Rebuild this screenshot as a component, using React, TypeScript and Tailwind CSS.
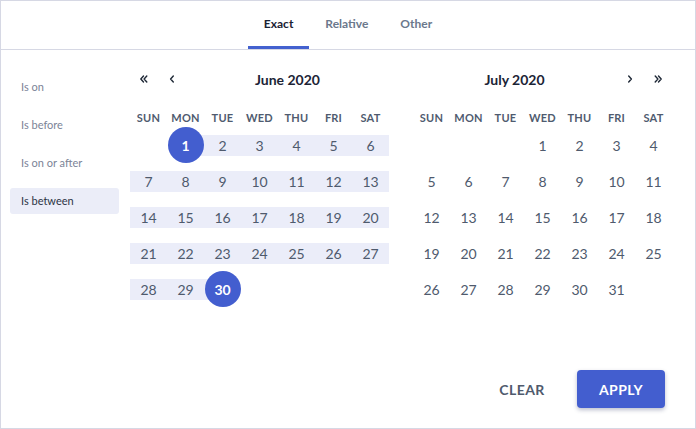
import React, { useState } from "react";

const DAYS = ["SUN", "MON", "TUE", "WED", "THU", "FRI", "SAT"];
const OPTIONS = ["Is on", "Is before", "Is on or after", "Is between"];
const TABS = ["Exact", "Relative", "Other"];

type Range = { start: number; end: number } | null;

const Chevron = ({ dir, double }: { dir: "left" | "right"; double?: boolean }) => {
  const flip = dir === "right" ? "scale(-1,1) translate(-12,0)" : undefined;
  return (
    <svg width="12" height="12" viewBox="0 0 12 12" fill="none" stroke="#1f2937" strokeWidth="1.4" strokeLinecap="round" strokeLinejoin="round">
      <g transform={flip}>
        {double ? (
          <>
            <path d="M5.5 3 2.8 6l2.7 3" />
            <path d="M8.8 3 6.1 6l2.7 3" />
          </>
        ) : (
          <path d="M7.3 3 4.6 6l2.7 3" />
        )}
      </g>
    </svg>
  );
};

const Month = ({
  title,
  offset,
  days,
  range,
  side,
}: {
  title: string;
  offset: number;
  days: number;
  range: Range;
  side: "left" | "right";
}) => {
  const cells: (number | null)[] = [];
  for (let i = 0; i < offset; i++) cells.push(null);
  for (let d = 1; d <= days; d++) cells.push(d);

  const nav = (
    <div className="flex">
      {side === "left" ? (
        <>
          <button className="w-[28px] h-[24px] flex items-center justify-center"><Chevron dir="left" double /></button>
          <button className="w-[28px] h-[24px] flex items-center justify-center"><Chevron dir="left" /></button>
        </>
      ) : (
        <>
          <button className="w-[28px] h-[24px] flex items-center justify-center"><Chevron dir="right" /></button>
          <button className="w-[28px] h-[24px] flex items-center justify-center"><Chevron dir="right" double /></button>
        </>
      )}
    </div>
  );

  return (
    <div className="w-[259px]">
      <div className="flex items-center h-[24px]">
        {side === "left" && nav}
        <div className="flex-1 text-center text-[14px] font-bold text-[#1c2436]">{title}</div>
        {side === "right" && nav}
      </div>
      <div className="grid grid-cols-7 mt-[18px] h-[18px] items-center">
        {DAYS.map((d) => (
          <div key={d} className="text-center text-[11px] font-bold text-[#4f5b6f] tracking-[0.02em]">{d}</div>
        ))}
      </div>
      <div className="grid grid-cols-7">
        {cells.map((d, i) => {
          const inRange = range && d !== null && d >= range.start && d <= range.end;
          const isStart = range && d === range.start;
          const isEnd = range && d === range.end;
          let band = "";
          if (isStart && isEnd) band = "";
          else if (isStart) band = "bg-[linear-gradient(to_right,transparent_50%,#ebedf9_50%)]";
          else if (isEnd) band = "bg-[linear-gradient(to_right,#ebedf9_50%,transparent_50%)]";
          else if (inRange) band = "bg-[#ebedf9]";
          return (
            <div key={i} className="h-[36px] flex items-center">
              <div className={`w-full h-[21px] flex items-center justify-center ${band}`}>
                {d !== null &&
                  (isStart || isEnd ? (
                    <span className="w-[36px] h-[36px] shrink-0 rounded-full bg-[#435ecf] text-white font-bold text-[14px] flex items-center justify-center">
                      {d}
                    </span>
                  ) : (
                    <span className="text-[14px] text-[#4f5a6d]">{d}</span>
                  ))}
              </div>
            </div>
          );
        })}
      </div>
    </div>
  );
};

export default function App() {
  const [tab, setTab] = useState("Exact");
  const [option, setOption] = useState("Is between");

  return (
    <div
      className="w-[696px] h-[429px] border border-[#d6d8e4] bg-white flex flex-col"
      style={{ fontFamily: "Lato, 'Open Sans', sans-serif" }}
    >
      <div className="h-[49px] border-b border-[#d6d8e4] flex justify-center shrink-0">
        {TABS.map((t) => (
          <button
            key={t}
            onClick={() => setTab(t)}
            className={`px-4 h-full flex items-center border-b-[3px] mb-[-1px] text-[12px] font-bold ${
              tab === t ? "border-[#4361cf] text-[#1a2233]" : "border-transparent text-[#6b788c]"
            }`}
          >
            {t}
          </button>
        ))}
      </div>

      <div className="flex flex-1">
        <div className="w-[129px] pl-[9px] pr-[11px] pt-[24px] flex flex-col gap-[12px]">
          {OPTIONS.map((o) => (
            <button
              key={o}
              onClick={() => setOption(o)}
              className={`h-[26px] rounded-[3px] px-[11px] text-left text-[11px] ${
                option === o ? "bg-[#ebedf8] text-[#2b3445]" : "text-[#7b8497]"
              }`}
            >
              {o}
            </button>
          ))}
        </div>

        <div className="flex gap-[24px] pt-[17px]">
          <Month title="June 2020" offset={1} days={30} range={{ start: 1, end: 30 }} side="left" />
          <Month title="July 2020" offset={3} days={31} range={null} side="right" />
        </div>
      </div>

      <div className="flex justify-end items-center gap-[11px] pr-[30px] pb-[20px]">
        <button className="w-[88px] h-[38px] text-[14px] font-bold text-[#4f5a6d] tracking-[0.03em]">CLEAR</button>
        <button className="w-[88px] h-[38px] rounded-[4px] bg-[#435ecf] text-white text-[14px] font-bold tracking-[0.03em] shadow-[0_2px_4px_rgba(30,40,90,0.3)]">
          APPLY
        </button>
      </div>
    </div>
  );
}
